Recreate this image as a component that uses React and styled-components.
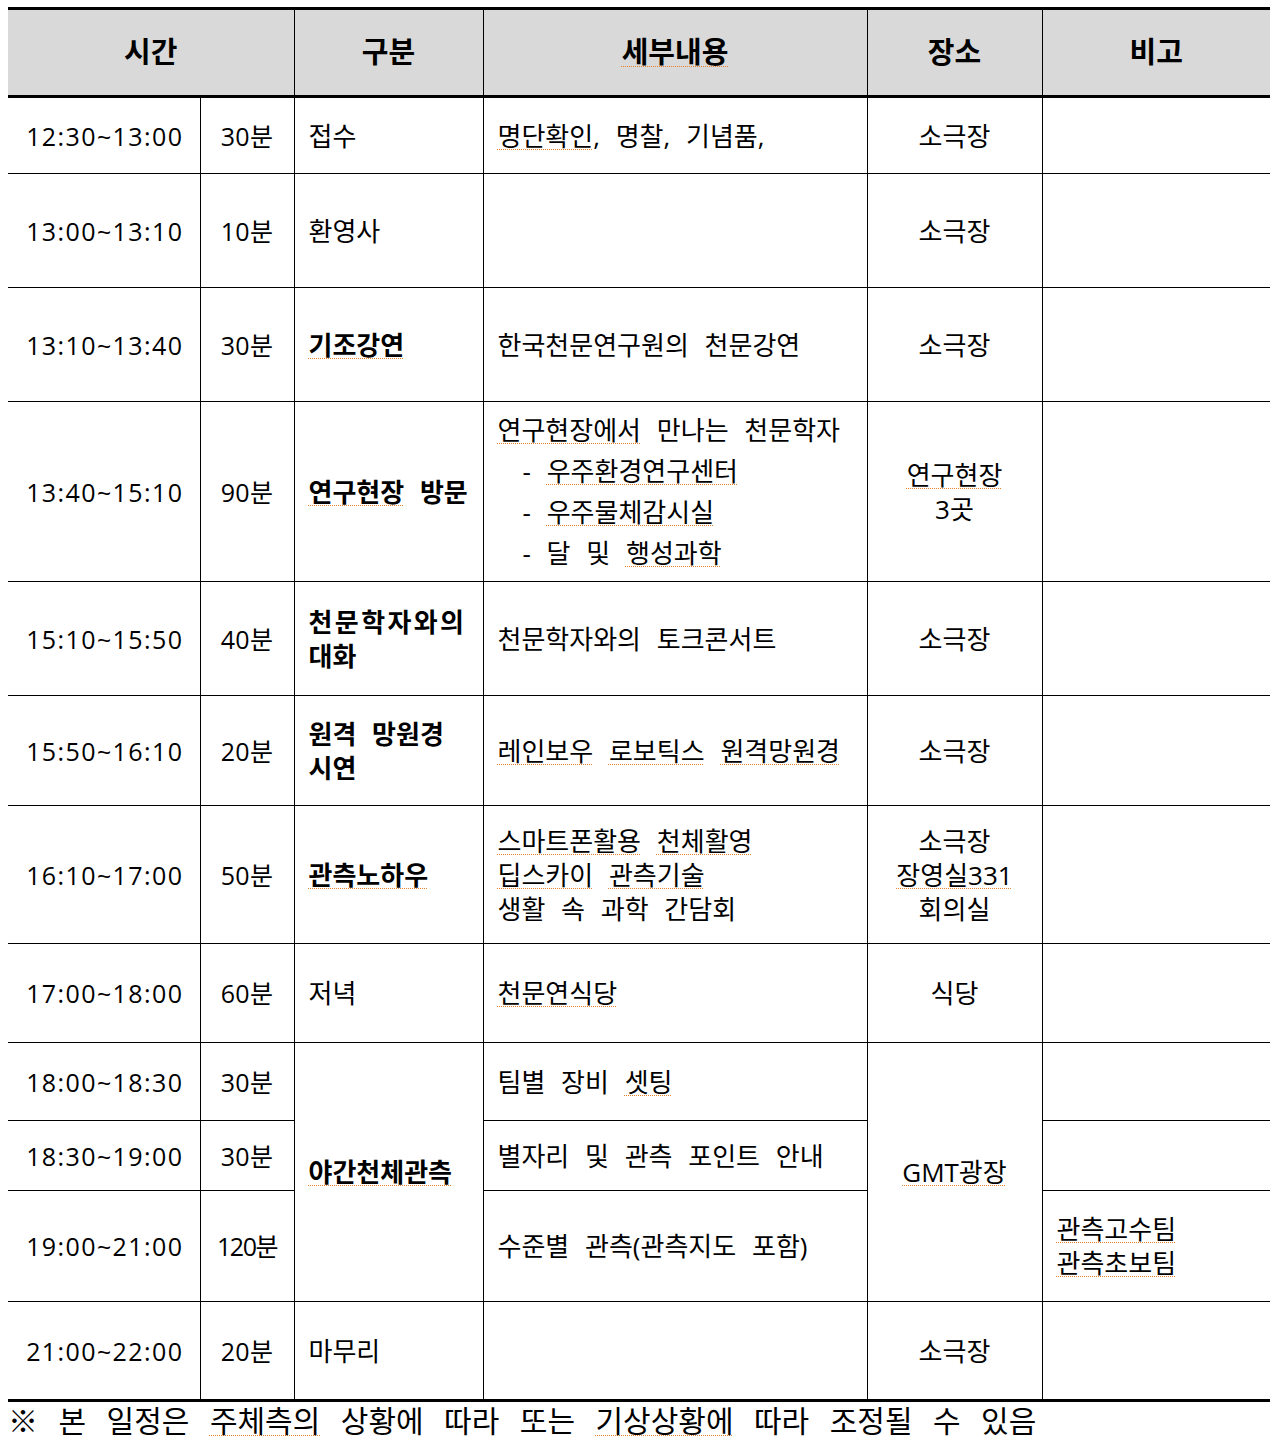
import React from 'react'
import styled, { createGlobalStyle, css } from 'styled-components'

const GlobalStyle = createGlobalStyle`
  html, body {
    margin: 0;
    padding: 0;
    background: #fff;
  }
  body {
    font-family: "Open Sans", "Noto Sans CJK KR", sans-serif;
    color: #000;
  }
`

const Page = styled.div`
  padding: 7px 7px 0 8px;
  width: 1262px;
`

const Table = styled.table`
  width: 1262px;
  border-collapse: collapse;
  table-layout: fixed;
`

const HeadRow = styled.tr`
  height: 88px;
`

const HeadCell = styled.th`
  background: #d9d9d9;
  border-top: 3px solid #000;
  border-bottom: 3px solid #000;
  border-left: 1px solid #000;
  font-size: 29px;
  font-weight: 700;
  text-align: center;
  vertical-align: middle;
  padding: 0 0 5px;

  &:first-child {
    border-left: none;
  }
`

const Row = styled.tr`
  height: ${p => p.$h}px;
`

const Cell = styled.td`
  border-top: 1px solid #000;
  border-bottom: ${p => (p.$last ? '3px' : '1px')} solid #000;
  border-left: 1px solid #000;
  font-size: 26px;
  line-height: 34px;
  word-spacing: 9px;
  vertical-align: middle;
  text-align: ${p => (p.$center ? 'center' : 'left')};
  padding: ${p => (p.$center ? '0 4px' : '0 8px 0 14px')};
  font-weight: ${p => (p.$bold ? 700 : 400)};
  white-space: nowrap;

  &:first-child {
    border-left: none;
  }

  ${p => p.$loose && css`
    line-height: 41px;
  `}
`

const TimeCell = styled(Cell)`
  text-align: center;
  padding: 0 0 0 2px;
  font-size: 25px;
  letter-spacing: 1.4px;
`

const MinCell = styled(Cell)`
  text-align: center;
  padding: 0;
  font-size: 25px;
  letter-spacing: ${p => (p.$tight ? '-1.5px' : '0.3px')};
`

const Spell = styled.span`
  text-decoration: underline dotted #e8822a;
  text-decoration-thickness: 1px;
  text-underline-offset: 3px;
`

const Spread = styled.span`
  letter-spacing: 2.4px;
`

const Indent = styled.div`
  padding-left: 25px;
`

const Note = styled.div`
  font-family: "Liberation Serif", "Noto Sans CJK KR", serif;
  font-size: 30px;
  line-height: 40px;
  word-spacing: 13px;
  white-space: nowrap;
`

const Lines = ({ items }) => items.map((it, i) => <div key={i}>{it}</div>)

const App = () => (
  <Page>
    <GlobalStyle />
    <Table>
      <colgroup>
        <col style={{ width: 192 }} />
        <col style={{ width: 94 }} />
        <col style={{ width: 189 }} />
        <col style={{ width: 384 }} />
        <col style={{ width: 175 }} />
        <col style={{ width: 228 }} />
      </colgroup>
      <thead>
        <HeadRow>
          <HeadCell colSpan={2}>시간</HeadCell>
          <HeadCell>구분</HeadCell>
          <HeadCell><Spell>세부내용</Spell></HeadCell>
          <HeadCell>장소</HeadCell>
          <HeadCell>비고</HeadCell>
        </HeadRow>
      </thead>
      <tbody>
        <Row $h={77}>
          <TimeCell>12:30~13:00</TimeCell>
          <MinCell>30분</MinCell>
          <Cell>접수</Cell>
          <Cell><Spell>명단확인</Spell>, 명찰, 기념품,</Cell>
          <Cell $center>소극장</Cell>
          <Cell />
        </Row>
        <Row $h={114}>
          <TimeCell>13:00~13:10</TimeCell>
          <MinCell>10분</MinCell>
          <Cell>환영사</Cell>
          <Cell />
          <Cell $center>소극장</Cell>
          <Cell />
        </Row>
        <Row $h={114}>
          <TimeCell>13:10~13:40</TimeCell>
          <MinCell>30분</MinCell>
          <Cell $bold><Spell>기조강연</Spell></Cell>
          <Cell>한국천문연구원의 천문강연</Cell>
          <Cell $center>소극장</Cell>
          <Cell />
        </Row>
        <Row $h={180}>
          <TimeCell>13:40~15:10</TimeCell>
          <MinCell>90분</MinCell>
          <Cell $bold><Spell>연구현장</Spell> 방문</Cell>
          <Cell $loose>
            <div><Spell>연구현장에서</Spell> 만나는 천문학자</div>
            <Indent>- <Spell>우주환경연구센터</Spell></Indent>
            <Indent>- <Spell>우주물체감시실</Spell></Indent>
            <Indent>- 달 및 <Spell>행성과학</Spell></Indent>
          </Cell>
          <Cell $center>
            <Lines items={[<Spell>연구현장</Spell>, '3곳']} />
          </Cell>
          <Cell />
        </Row>
        <Row $h={114}>
          <TimeCell>15:10~15:50</TimeCell>
          <MinCell>40분</MinCell>
          <Cell $bold>
            <Lines items={[<Spread>천문학자와의</Spread>, '대화']} />
          </Cell>
          <Cell>천문학자와의 토크콘서트</Cell>
          <Cell $center>소극장</Cell>
          <Cell />
        </Row>
        <Row $h={110}>
          <TimeCell>15:50~16:10</TimeCell>
          <MinCell>20분</MinCell>
          <Cell $bold>
            <Lines items={['원격 망원경', '시연']} />
          </Cell>
          <Cell><Spell>레인보우</Spell> <Spell>로보틱스</Spell> <Spell>원격망원경</Spell></Cell>
          <Cell $center>소극장</Cell>
          <Cell />
        </Row>
        <Row $h={138}>
          <TimeCell>16:10~17:00</TimeCell>
          <MinCell>50분</MinCell>
          <Cell $bold><Spell>관측노하우</Spell></Cell>
          <Cell>
            <Lines
              items={[
                <><Spell>스마트폰활용</Spell> <Spell>천체활영</Spell></>,
                <><Spell>딥스카이</Spell> <Spell>관측기술</Spell></>,
                '생활 속 과학 간담회'
              ]}
            />
          </Cell>
          <Cell $center>
            <Lines items={['소극장', <Spell>장영실331</Spell>, '회의실']} />
          </Cell>
          <Cell />
        </Row>
        <Row $h={99}>
          <TimeCell>17:00~18:00</TimeCell>
          <MinCell>60분</MinCell>
          <Cell>저녁</Cell>
          <Cell><Spell>천문연식당</Spell></Cell>
          <Cell $center>식당</Cell>
          <Cell />
        </Row>
        <Row $h={78}>
          <TimeCell>18:00~18:30</TimeCell>
          <MinCell>30분</MinCell>
          <Cell $bold rowSpan={3}><Spell>야간천체관측</Spell></Cell>
          <Cell>팀별 장비 <Spell>셋팅</Spell></Cell>
          <Cell $center rowSpan={3}><Spell>GMT광장</Spell></Cell>
          <Cell />
        </Row>
        <Row $h={70}>
          <TimeCell>18:30~19:00</TimeCell>
          <MinCell>30분</MinCell>
          <Cell>별자리 및 관측 포인트 안내</Cell>
          <Cell />
        </Row>
        <Row $h={111}>
          <TimeCell>19:00~21:00</TimeCell>
          <MinCell $tight>120분</MinCell>
          <Cell>수준별 관측(관측지도 포함)</Cell>
          <Cell>
            <Lines items={[<Spell>관측고수팀</Spell>, <Spell>관측초보팀</Spell>]} />
          </Cell>
        </Row>
        <Row $h={99}>
          <TimeCell $last>21:00~22:00</TimeCell>
          <MinCell $last>20분</MinCell>
          <Cell $last>마무리</Cell>
          <Cell $last />
          <Cell $last $center>소극장</Cell>
          <Cell $last />
        </Row>
      </tbody>
    </Table>
    <Note>
      ※ 본 일정은 <Spell>주체측의</Spell> 상황에 따라 또는 <Spell>기상상황에</Spell> 따라 조정될 수 있음
    </Note>
  </Page>
)

export default App
